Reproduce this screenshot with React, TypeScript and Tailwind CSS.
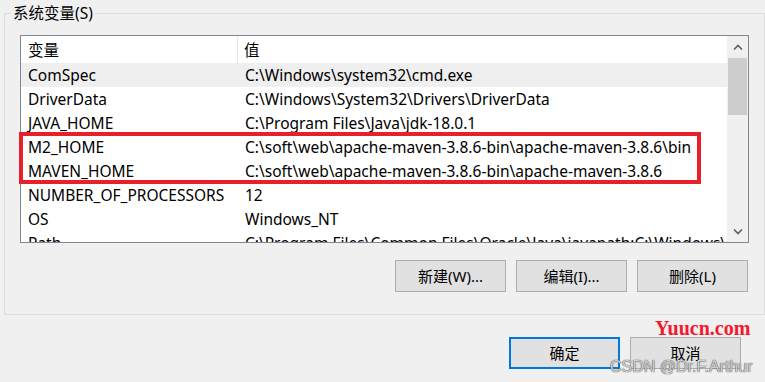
import React from "react";

const rows: [string, string][] = [
  ["ComSpec", "C:\\Windows\\system32\\cmd.exe"],
  ["DriverData", "C:\\Windows\\System32\\Drivers\\DriverData"],
  ["JAVA_HOME", "C:\\Program Files\\Java\\jdk-18.0.1"],
  ["M2_HOME", "C:\\soft\\web\\apache-maven-3.8.6-bin\\apache-maven-3.8.6\\bin"],
  ["MAVEN_HOME", "C:\\soft\\web\\apache-maven-3.8.6-bin\\apache-maven-3.8.6"],
  ["NUMBER_OF_PROCESSORS", "12"],
  ["OS", "Windows_NT"],
  ["Path", "C:\\Program Files\\Common Files\\Oracle\\Java\\javapath;C:\\Windows\\system32"],
];

const font = { fontFamily: '"Noto Sans", "Noto Sans CJK SC", sans-serif' };

function Btn({ label, primary }: { label: string; primary?: boolean }) {
  return (
    <div
      className={
        "flex items-center justify-center bg-[#e1e1e1] text-[15px] text-black " +
        (primary ? "border-2 border-[#0078d7] w-[111px] h-[32px]" : "border border-[#adadad] w-[111px] h-[32px]")
      }
    >
      {label}
    </div>
  );
}

export default function App() {
  return (
    <div className="w-[765px] h-[382px] bg-[#f0f0f0] overflow-hidden relative text-black" style={font}>
      <div className="pt-[13px] pl-[4px]">
        <div className="relative border border-[#dcdcdc] w-[761px] h-[302px] pt-[21px] pl-[15px]">
          <div className="absolute left-[6px] top-[-12px] bg-[#f0f0f0] px-[2px] text-[15.5px] leading-[22px]">
            系统变量(S)
          </div>
          <div className="flex w-[729px] h-[208px] border border-[#828790] bg-white overflow-hidden">
            <div className="flex-1 flex flex-col overflow-hidden min-w-0">
              <div className="flex h-[27px] shrink-0 text-[15.5px] leading-[25px]">
                <div className="w-[217px] shrink-0 pl-[7px] pt-[2px] border-r border-[#e5e5e5]">变量</div>
                <div className="pl-[6px] pt-[2px]">值</div>
              </div>
              {rows.map(([k, v], i) => (
                <div
                  key={k}
                  className={
                    "flex h-[24px] shrink-0 text-[15.5px] leading-[24px] whitespace-nowrap " +
                    (i === 0 ? "bg-[#efefef]" : "")
                  }
                >
                  <div className="w-[217px] shrink-0 pl-[7px]">{k}</div>
                  <div className="pl-[7px] shrink-0">{v}</div>
                </div>
              ))}
            </div>
            <div className="w-[21px] bg-[#f0f0f0] flex flex-col shrink-0">
              <div className="h-[22px] flex items-center justify-center">
                <svg width="10" height="6" viewBox="0 0 10 6">
                  <path d="M1 5.5 L5 1.5 L9 5.5" stroke="#606060" strokeWidth="1.6" fill="none" />
                </svg>
              </div>
              <div className="h-[57px] bg-[#cdcdcd] mx-[1px]" />
              <div className="flex-1" />
              <div className="h-[20px] flex items-start justify-center pt-[7px]">
                <svg width="10" height="6" viewBox="0 0 10 6">
                  <path d="M1 0.5 L5 4.5 L9 0.5" stroke="#606060" strokeWidth="1.6" fill="none" />
                </svg>
              </div>
            </div>
          </div>
          <div className="flex justify-end gap-[10px] w-[728px] mt-[17px]">
            <Btn label="新建(W)..." />
            <Btn label="编辑(I)..." />
            <Btn label="删除(L)" />
          </div>
        </div>
      </div>
      <div className="flex justify-end gap-[10px] pr-[24px] mt-[22px]">
        <Btn label="确定" primary />
        <Btn label="取消" />
      </div>
      <div className="absolute left-[19px] top-[132px] w-[682px] h-[52px] border-[4px] border-[#e8202a] pointer-events-none" />
      <div
        className="absolute left-[655px] top-[313px] text-[20px] font-bold text-[#f5192e]"
        style={{ fontFamily: '"Liberation Serif", serif' }}
      >
        Yuucn.com
      </div>
      <div
        className="absolute left-[610px] top-[355px] text-[16px] text-[#d0d0d0]"
        style={{ fontFamily: '"Liberation Sans", sans-serif', textShadow: "0 0 1px #505050, 0 0 1px #505050" }}
      >
        CSDN @Dr.F.Arthur
      </div>
    </div>
  );
}
